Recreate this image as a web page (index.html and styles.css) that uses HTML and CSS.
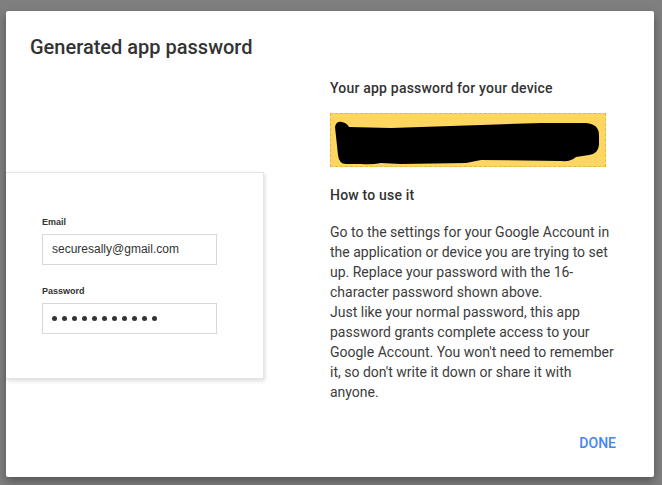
FILE: index.html
```html
<!DOCTYPE html>
<html lang="en">
<head>
<meta charset="utf-8">
<title>Generated app password</title>
<link rel="stylesheet" href="styles.css">
</head>
<body>
<div class="dialog">
  <h1 class="title">Generated app password</h1>
  <div class="body">
    <div class="preview">
      <div class="card">
        <div class="field-label">Email</div>
        <div class="field-input">securesally@gmail.com</div>
        <div class="field-label second">Password</div>
        <div class="field-input dots">
          <span class="dot"></span><span class="dot"></span><span class="dot"></span><span class="dot"></span><span class="dot"></span><span class="dot"></span><span class="dot"></span><span class="dot"></span><span class="dot"></span><span class="dot"></span><span class="dot"></span>
        </div>
      </div>
    </div>
    <div class="info">
      <h2 class="heading">Your app password for your device</h2>
      <div class="password-box">
        <svg class="scribble" width="274" height="52" viewBox="0 0 274 52">
          <path d="M4,13 Q5,7 11,8 Q16,9 18,13 L60,14 L90,13 L150,11 L210,9 L255,9 Q268,10 268,21 L268,31 Q267,40 258,41 L245,43 Q240,48 230,47 L150,46 L135,49 L70,50 L50,49 Q40,51 30,50 L15,50 Q8,50 7,41 Z" fill="#000"/>
        </svg>
      </div>
      <h2 class="heading how">How to use it</h2>
      <p class="text">Go to the settings for your Google Account in the application or device you are trying to set up. Replace your password with the 16-character password shown above.<br>Just like your normal password, this app password grants complete access to your Google Account. You won't need to remember<br>it, so don't write it down or share it with<br>anyone.</p>
    </div>
  </div>
  <div class="footer">
    <button class="done">DONE</button>
  </div>
</div>
</body>
</html>
```

FILE: styles.css
```css
html, body {
  margin: 0;
  padding: 0;
}
body {
  background: #7f7f7f;
  width: 662px;
  height: 485px;
  overflow: hidden;
  font-family: Roboto, "Liberation Sans", Arial, sans-serif;
}
.dialog {
  box-sizing: border-box;
  margin: 11px 0 0 6px;
  width: 648px;
  height: 466px;
  background: #fff;
  border-radius: 2px;
  box-shadow: 0 4px 10px rgba(0, 0, 0, 0.35);
  padding-top: 24px;
  display: flex;
  flex-direction: column;
}
.title {
  margin: 0;
  padding-left: 24px;
  font-size: 20px;
  font-weight: 500;
  line-height: 24px;
  color: #333;
}
.body {
  display: flex;
  margin-top: 19px;
}
.preview {
  width: 324px;
  flex: none;
}
.card {
  box-sizing: border-box;
  margin-top: 94px;
  width: 258px;
  height: 207px;
  border: 1px solid #e4e4e4;
  border-left: none;
  box-shadow: 1px 2px 4px rgba(0, 0, 0, 0.14);
  padding: 44px 0 0 36px;
  font-family: "Liberation Sans", Arial, sans-serif;
}
.field-label {
  font-size: 9px;
  font-weight: 700;
  line-height: 11px;
  color: #333;
  margin-bottom: 6px;
}
.field-label.second {
  margin-top: 21px;
}
.field-input {
  box-sizing: border-box;
  width: 175px;
  height: 31px;
  border: 1px solid #d8d8d8;
  padding-left: 9px;
  font-size: 12px;
  line-height: 29px;
  color: #333;
}
.dots {
  display: flex;
  align-items: center;
  gap: 5px;
}
.dot {
  width: 5px;
  height: 5px;
  border-radius: 50%;
  background: #333;
}
.info {
  width: 300px;
  flex: none;
}
.heading {
  margin: 0;
  font-size: 14px;
  font-weight: 500;
  line-height: 20px;
  letter-spacing: 0.2px;
  color: #333;
}
.heading.how {
  margin-top: 18px;
}
.password-box {
  box-sizing: border-box;
  margin-top: 15px;
  width: 276px;
  height: 54px;
  background: #ffd65f;
  border: 1px dashed #e0b94a;
}
.scribble {
  display: block;
}
.text {
  margin: 17px 0 0;
  font-size: 14px;
  line-height: 20px;
  color: #3c3c3c;
}
.footer {
  display: flex;
  justify-content: flex-end;
  margin-top: 23px;
  padding-right: 30px;
}
.done {
  border: none;
  background: transparent;
  padding: 0 8px;
  height: 36px;
  line-height: 36px;
  font-family: Roboto, "Liberation Sans", Arial, sans-serif;
  font-size: 14px;
  font-weight: 500;
  color: #4285f4;
  cursor: pointer;
}
```
